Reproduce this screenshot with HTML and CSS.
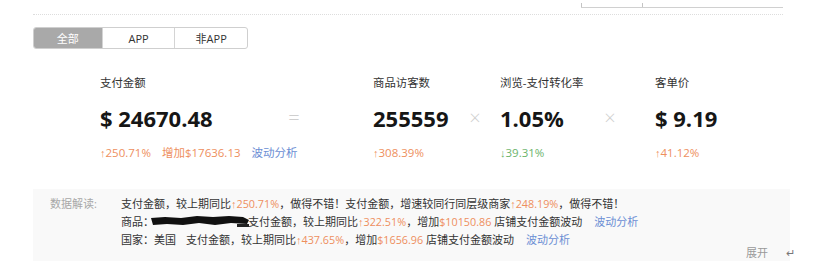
FILE: index.html
```html
<!DOCTYPE html>
<html lang="zh-CN">
<head>
  <meta charset="UTF-8">
  <title>支付金额分析</title>
  <link rel="stylesheet" href="styles.css">
</head>
<body>
  <!-- Ruler / page edge -->
  <div class="ruler">
    <div class="ruler-line">
      <div class="ruler-tick"></div>
    </div>
  </div>

  <!-- Channel Tabs -->
  <div class="tabs">
    <div class="tab active">全部</div>
    <div class="tab">APP</div>
    <div class="tab">非APP</div>
  </div>

  <!-- Metrics -->
  <div class="metrics">
    <div class="metric pay">
      <div class="metric-label">支付金额</div>
      <div class="metric-value">$ 24670.48</div>
      <div class="metric-change">
        <span class="up"><i>↑</i>250.71%</span>
        <span class="up">增加$17636.13</span>
        <a class="link" href="#">波动分析</a>
      </div>
    </div>
    <div class="sep">=</div>
    <div class="metric visitors">
      <div class="metric-label">商品访客数</div>
      <div class="metric-value">255559</div>
      <div class="metric-change"><span class="up"><i>↑</i>308.39%</span></div>
    </div>
    <div class="sep">×</div>
    <div class="metric rate">
      <div class="metric-label">浏览-支付转化率</div>
      <div class="metric-value">1.05%</div>
      <div class="metric-change"><span class="down"><i>↓</i>39.31%</span></div>
    </div>
    <div class="sep">×</div>
    <div class="metric price">
      <div class="metric-label">客单价</div>
      <div class="metric-value">$ 9.19</div>
      <div class="metric-change"><span class="up"><i>↑</i>41.12%</span></div>
    </div>
  </div>

  <!-- Data Interpretation -->
  <div class="insight">
    <div class="insight-label">数据解读:</div>
    <div class="insight-body">
      <p>支付金额，较上期同比<span class="up"><i>↑</i>250.71%</span>，做得不错！支付金额，增速较同行同层级商家<span class="up"><i>↑</i>248.19%</span>，做得不错！</p>
      <p>商品：<svg class="redact" width="98" height="12" viewBox="0 0 98 12"><path d="M0 3 L14 2 L30 3 L46 1 L62 2 L78 1 L92 2 L98 5 L96 9 L80 8 L64 10 L48 8 L32 10 L16 9 L2 10 Z" fill="#111"/><path d="M86 9 L98 9 L98 12 L86 12 Z" fill="#222"/></svg>支付金额，较上期同比<span class="up"><i>↑</i>322.51%</span>，增加<span class="up">$10150.86</span> 店铺支付金额波动<a class="link" href="#">波动分析</a></p>
      <p>国家：美国<span class="gap"></span>支付金额，较上期同比<span class="up"><i>↑</i>437.65%</span>，增加<span class="up">$1656.96</span> 店铺支付金额波动<a class="link" href="#">波动分析</a></p>
    </div>
    <div class="insight-more">展开<span class="mark">↵</span></div>
  </div>
</body>
</html>
```

FILE: styles.css
```css
/* Reset */
* {
  margin: 0;
  padding: 0;
  box-sizing: border-box;
}

body {
  background-color: #fff;
  color: #333;
  font-family: "Open Sans", "Noto Sans CJK SC", sans-serif;
  font-size: 11px;
  overflow: hidden;
}

:root {
  --up-color: #ee8f5e;
  --down-color: #6cb46c;
  --link-color: #6b8ed4;
  --muted: #a8a8a8;
}

/* Ruler */
.ruler {
  height: 15px;
  margin: 0 30px 0 33px;
  border-bottom: 1px dotted #ddd;
  display: flex;
  justify-content: flex-end;
}

.ruler-line {
  width: 202px;
  height: 8px;
  border-bottom: 1px solid #d0d0d0;
  display: flex;
  align-items: flex-end;
}

.ruler-tick {
  width: 62px;
  height: 4px;
  border-left: 1px solid #c4c4c4;
  border-right: 1px solid #c4c4c4;
}

/* Tabs */
.tabs {
  display: flex;
  width: 215px;
  height: 22px;
  margin: 12px 0 0 33px;
  border: 1px solid #cfcfcf;
  border-radius: 3px;
  overflow: hidden;
}

.tab {
  display: flex;
  align-items: center;
  justify-content: center;
  font-size: 11px;
  color: #333;
  width: 74px;
}

.tab:first-child {
  width: 69px;
}

.tab + .tab {
  border-left: 1px solid #d4d4d4;
}

.tab.active {
  background-color: #a9a9a9;
  color: #fff;
}

/* Metrics */
.metrics {
  display: flex;
  margin: 26px 0 0 100px;
}

.metric-label {
  font-size: 11.4px;
  line-height: 16px;
  color: #333;
  white-space: nowrap;
}

.metric-value {
  font-size: 22px;
  font-weight: 700;
  line-height: 30px;
  color: #161616;
  margin-top: 12px;
  white-space: nowrap;
}

.metric-change {
  font-size: 11.5px;
  line-height: 16px;
  margin-top: 12px;
  display: flex;
  gap: 11px;
  white-space: nowrap;
}

.pay { width: 180px; }
.visitors { width: 88px; margin-left: 65px; }
.rate { width: 96px; margin-left: 11px; }
.price { margin-left: 31px; }

.sep {
  width: 28px;
  padding-top: 28px;
  line-height: 30px;
  text-align: center;
  font-size: 20px;
  font-weight: 300;
  color: #cfcfcf;
}

.up { color: var(--up-color); }
.down { color: var(--down-color); }

.up i, .down i {
  font-style: normal;
  font-family: "Liberation Sans", sans-serif;
  font-size: 11px;
}

.link {
  color: var(--link-color);
  text-decoration: none;
}

/* Data Interpretation */
.insight {
  display: flex;
  flex-wrap: wrap;
  align-content: flex-start;
  margin: 28px 23px 0 33px;
  padding: 6px 0 0 17px;
  background-color: #f9f9f9;
  height: 80px;
}

.insight-label {
  width: 71px;
  color: var(--muted);
  line-height: 17px;
}

.insight-body {
  flex: 1;
}

.insight-body p {
  line-height: 17px;
  white-space: nowrap;
}

.insight-body .up {
  font-size: 10.8px;
}

.insight-body .link {
  margin-left: 12px;
}

.gap {
  display: inline-block;
  width: 10px;
}

.redact {
  vertical-align: -1px;
  margin: 0 -1px 0 -3px;
}

.insight-more {
  width: 100%;
  display: flex;
  justify-content: flex-end;
  gap: 18px;
  margin-top: -2px;
  color: #999;
  line-height: 12px;
}

.mark {
  color: #777;
  margin-right: -5px;
}
```
